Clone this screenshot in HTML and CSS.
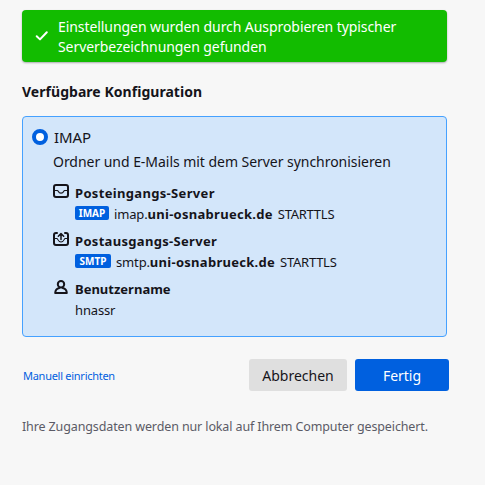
FILE: index.html
```html
<!DOCTYPE html>
<html lang="de">
<head>
    <meta charset="UTF-8">
    <meta name="viewport" content="width=device-width, initial-scale=1.0">
    <title>Konto einrichten</title>
    <link rel="stylesheet" href="styles.css">
</head>
<body>
    <div class="container">
        <div class="notification">
            <svg class="check" width="14" height="12" viewBox="0 0 14 12"><path d="M1.7 6.2 L5 9.4 L11.8 2.2" /></svg>
            <p>Einstellungen wurden durch Ausprobieren typischer<br>Serverbezeichnungen gefunden</p>
        </div>

        <h2>Verfügbare Konfiguration</h2>

        <!-- Gefundene Konfiguration -->
        <div class="config">
            <label class="protocol">
                <span class="radio"></span>
                <span class="protocol-name">IMAP</span>
            </label>
            <p class="description">Ordner und E-Mails mit dem Server synchronisieren</p>

            <div class="entry">
                <svg class="icon" width="16" height="16" viewBox="0 0 16 16">
                    <rect x="1" y="1" width="14" height="12" rx="2" stroke-width="2" />
                    <path d="M2 6.5 H4.5 C5.3 6.5 5.2 9.2 8 9.2 S10.7 6.5 11.5 6.5 H14" stroke-width="1.2" />
                </svg>
                <div>
                    <div class="title incoming">Posteingangs-Server</div>
                    <div class="detail">
                        <span class="badge">IMAP</span>
                        <span class="host">imap.<b>uni-osnabrueck.de</b></span>
                        <span class="security">STARTTLS</span>
                    </div>
                </div>
            </div>

            <div class="entry">
                <svg class="icon" width="16" height="16" viewBox="0 0 16 16">
                    <path d="M4 1 H3 Q1 1 1 3 V11 Q1 13 3 13 H13 Q15 13 15 11 V3 Q15 1 13 1 H12" stroke-width="2" />
                    <path d="M2 6.5 H4 C4.7 6.5 5 10 8 10 S11.3 6.5 12 6.5 H14" stroke-width="1.1" />
                    <path d="M8 7.6 V2 M5.3 4.3 L8 1.6 L10.7 4.3" stroke-width="1.5" />
                </svg>
                <div>
                    <div class="title outgoing">Postausgangs-Server</div>
                    <div class="detail">
                        <span class="badge badge-smtp">SMTP</span>
                        <span class="host">smtp.<b>uni-osnabrueck.de</b></span>
                        <span class="security">STARTTLS</span>
                    </div>
                </div>
            </div>

            <div class="entry">
                <svg class="icon" width="16" height="16" viewBox="0 0 16 16">
                    <circle cx="8" cy="4.2" r="3.2" stroke-width="2" />
                    <path d="M6.3 7.9 Q2.4 8.7 2.2 13 H13.8 Q13.6 8.7 9.7 7.9" stroke-width="2" />
                </svg>
                <div>
                    <div class="title">Benutzername</div>
                    <div class="detail"><span class="username">hnassr</span></div>
                </div>
            </div>
        </div>

        <div class="actions">
            <a class="manual">Manuell einrichten</a>
            <button class="btn btn-cancel">Abbrechen</button>
            <button class="btn btn-primary">Fertig</button>
        </div>

        <p class="footnote">Ihre Zugangsdaten werden nur lokal auf Ihrem Computer gespeichert.</p>
    </div>
</body>
</html>
```
FILE: styles.css
```css
* {
    margin: 0;
    padding: 0;
    box-sizing: border-box;
}

body {
    font-family: 'Noto Sans', 'Open Sans', sans-serif;
    font-size: 14px;
    background: #f7f7f7;
    color: #15141a;
    white-space: nowrap;
}

.container {
    width: 427px;
    margin-left: 22px;
    padding-top: 10px;
}

.notification {
    display: flex;
    align-items: center;
    width: 425px;
    height: 52px;
    padding-left: 13px;
    background: #12bc00;
    color: #fff;
    border-radius: 4px;
    box-shadow: 0 1px 2px rgba(58, 57, 68, 0.4);
    line-height: 20px;
}

.notification p {
    margin-left: 9px;
    padding-top: 1px;
    letter-spacing: -0.07px;
}

.check {
    fill: none;
    stroke: #fff;
    stroke-width: 2;
    stroke-linecap: round;
    stroke-linejoin: round;
}

h2 {
    margin-top: 19px;
    height: 35px;
    font-size: 14px;
    line-height: 22px;
    letter-spacing: 0.04px;
}

.config {
    width: 425px;
    height: 221px;
    padding: 10px 9px;
    background: #d3e6fa;
    border: 1px solid #45a1ff;
    border-radius: 4px;
}

.protocol {
    display: flex;
    align-items: center;
    gap: 6px;
    height: 20px;
}

.protocol-name {
    font-size: 15px;
    line-height: 20px;
    letter-spacing: -0.1px;
}

.radio {
    width: 16px;
    height: 16px;
    border: 4px solid #0060df;
    border-radius: 50%;
    background: #fff;
}

.description {
    height: 36px;
    padding: 4px 0 0 21px;
    line-height: 22px;
    letter-spacing: -0.04px;
}

.entry {
    display: flex;
    gap: 6px;
    height: 48px;
    padding-left: 21px;
}

.icon {
    margin-top: 1px;
    fill: none;
    stroke: #15141a;
    stroke-linecap: round;
    stroke-linejoin: round;
}

.title {
    height: 20px;
    font-size: 13px;
    font-weight: bold;
    line-height: 20px;
}

.incoming {
    letter-spacing: 0.33px;
}

.outgoing {
    letter-spacing: 0.31px;
}

.detail {
    display: flex;
    align-items: center;
    height: 22px;
    font-size: 13px;
    line-height: 22px;
}

.detail b {
    letter-spacing: 0.28px;
}

.badge {
    width: 34px;
    height: 14px;
    margin-right: 5px;
    margin-bottom: 2px;
    background: #0060df;
    color: #fff;
    border-radius: 2px;
    font-size: 10px;
    font-weight: bold;
    line-height: 14px;
    text-align: center;
}

.badge-smtp {
    width: 36px;
}

.host {
    letter-spacing: -0.15px;
}

.security {
    margin-left: 5px;
    letter-spacing: -0.25px;
}

.username {
    letter-spacing: -0.15px;
}

.actions {
    display: flex;
    align-items: center;
    height: 32px;
    margin-top: 22px;
}

.manual {
    margin-left: 1px;
    margin-right: auto;
    padding-top: 1px;
    color: #0060df;
    font-size: 11px;
    letter-spacing: -0.27px;
}

.btn {
    height: 32px;
    border: none;
    border-radius: 3px;
    font-family: inherit;
    font-size: 14px;
}

.btn-cancel {
    width: 98px;
    margin-right: 8px;
    background: #dfdfdf;
    color: #15141a;
}

.btn-primary {
    width: 94px;
    background: #0060df;
    color: #fff;
}

.footnote {
    margin-top: 26px;
    color: #5b5b66;
    font-size: 12.5px;
    line-height: 20px;
    letter-spacing: -0.12px;
}
```
